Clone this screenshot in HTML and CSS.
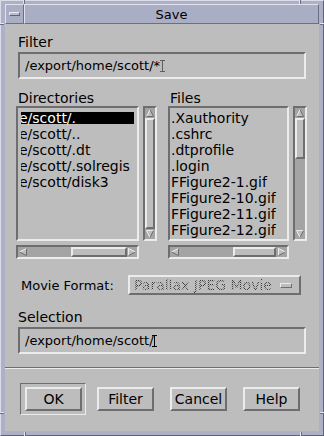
FILE: index.html
```html
<!DOCTYPE html>
<html lang="en">
<head>
    <meta charset="UTF-8">
    <title>Save</title>
    <link rel="stylesheet" href="styles.css">
</head>
<body>
    <div class="window">
        <span class="notch notch-top-l"></span>
        <span class="notch notch-top-r"></span>
        <span class="notch notch-bot-l"></span>
        <span class="notch notch-bot-r"></span>
        <span class="notch-h notch-left-t"></span>
        <span class="notch-h notch-left-b"></span>
        <span class="notch-h notch-right-t"></span>
        <span class="notch-h notch-right-b"></span>

        <div class="titlebar">
            <div class="menu-btn"><span class="menu-bar"></span></div>
            <div class="title">Save</div>
        </div>

        <div class="dialog">
            <div class="label label-first">Filter</div>
            <div class="field">/export/home/scott/*<span class="caret dim"></span></div>

            <div class="lists">
                <div class="pane pane-dirs">
                    <div class="label">Directories</div>
                    <div class="list-row">
                        <div class="list list-dirs">
                            <div class="item selected">e/scott/.</div>
                            <div class="item">e/scott/..</div>
                            <div class="item">e/scott/.dt</div>
                            <div class="item">e/scott/.solregis</div>
                            <div class="item">e/scott/disk3</div>
                        </div>
                        <div class="vscroll">
                            <svg class="arrow" width="10" height="10"><polygon points="5,1 9,9 1,9" fill="#bdbdbd"/><path d="M1.5 9 L5 1.5" stroke="#ececec" fill="none"/><path d="M5 1.5 L8.5 8.5 L1.5 8.5" stroke="#6e6e6e" fill="none"/></svg>
                            <div class="track"><div class="slider" style="height:111px"></div></div>
                            <svg class="arrow" width="10" height="10"><polygon points="1,1 9,1 5,9" fill="#bdbdbd"/><path d="M5 8.5 L1.5 1.5 L8.5 1.5" stroke="#ececec" fill="none"/><path d="M8.5 1.5 L5 8.5" stroke="#6e6e6e" fill="none"/></svg>
                        </div>
                    </div>
                    <div class="hscroll">
                        <svg class="arrow" width="10" height="10"><polygon points="1,5 9,1 9,9" fill="#bdbdbd"/><path d="M1.5 5 L8.5 1.5" stroke="#ececec" fill="none"/><path d="M8.5 1.5 L8.5 8.5 L1.5 5" stroke="#6e6e6e" fill="none"/></svg>
                        <div class="htrack"><div class="hslider" style="margin-left:43px;width:56px"></div></div>
                        <svg class="arrow" width="10" height="10"><polygon points="1,1 9,5 1,9" fill="#bdbdbd"/><path d="M1.5 8.5 L1.5 1.5 L8.5 5" stroke="#ececec" fill="none"/><path d="M8.5 5 L1.5 8.5" stroke="#6e6e6e" fill="none"/></svg>
                    </div>
                </div>

                <div class="pane pane-files">
                    <div class="label">Files</div>
                    <div class="list-row">
                        <div class="list list-files">
                            <div class="item">.Xauthority</div>
                            <div class="item">.cshrc</div>
                            <div class="item">.dtprofile</div>
                            <div class="item">.login</div>
                            <div class="item">FFigure2-1.gif</div>
                            <div class="item">FFigure2-10.gif</div>
                            <div class="item">FFigure2-11.gif</div>
                            <div class="item">FFigure2-12.gif</div>
                        </div>
                        <div class="vscroll">
                            <svg class="arrow" width="10" height="10"><polygon points="5,1 9,9 1,9" fill="#bdbdbd"/><path d="M1.5 9 L5 1.5" stroke="#ececec" fill="none"/><path d="M5 1.5 L8.5 8.5 L1.5 8.5" stroke="#6e6e6e" fill="none"/></svg>
                            <div class="track"><div class="slider" style="height:41px"></div></div>
                            <svg class="arrow" width="10" height="10"><polygon points="1,1 9,1 5,9" fill="#bdbdbd"/><path d="M5 8.5 L1.5 1.5 L8.5 1.5" stroke="#ececec" fill="none"/><path d="M8.5 1.5 L5 8.5" stroke="#6e6e6e" fill="none"/></svg>
                        </div>
                    </div>
                    <div class="hscroll">
                        <svg class="arrow" width="10" height="10"><polygon points="1,5 9,1 9,9" fill="#bdbdbd"/><path d="M1.5 5 L8.5 1.5" stroke="#ececec" fill="none"/><path d="M8.5 1.5 L8.5 8.5 L1.5 5" stroke="#6e6e6e" fill="none"/></svg>
                        <div class="htrack"><div class="hslider" style="margin-left:53px;width:43px"></div></div>
                        <svg class="arrow" width="10" height="10"><polygon points="1,1 9,5 1,9" fill="#bdbdbd"/><path d="M1.5 8.5 L1.5 1.5 L8.5 5" stroke="#ececec" fill="none"/><path d="M8.5 5 L1.5 8.5" stroke="#6e6e6e" fill="none"/></svg>
                    </div>
                </div>
            </div>

            <div class="format-row">
                <span class="format-label">Movie Format:</span>
                <div class="option">
                    <span class="option-text">Parallax JPEG Movie</span>
                    <span class="option-mark"></span>
                </div>
            </div>

            <div class="label label-selection">Selection</div>
            <div class="field">/export/home/scott/<span class="caret"></span></div>

            <div class="separator"></div>

            <div class="buttons">
                <div class="default-ring"><button type="button">OK</button></div>
                <button type="button" class="btn-filter">Filter</button>
                <button type="button" class="btn-gap">Cancel</button>
                <button type="button" class="btn-gap">Help</button>
            </div>
        </div>
    </div>
</body>
</html>
```

FILE: styles.css
```css
html, body {
    margin: 0;
    padding: 0;
}
body {
    width: 324px;
    height: 436px;
    overflow: hidden;
    font-family: "DejaVu Sans", sans-serif;
    color: #000;
}
.window {
    position: relative;
    box-sizing: border-box;
    width: 324px;
    height: 436px;
    display: flex;
    flex-direction: column;
    background: #aeb1c6;
    border: 1px solid;
    border-color: #dadcea #5f6378 #5f6378 #dadcea;
    padding: 3px 4px 4px 4px;
}

/* resize handle marks on the frame */
.notch {
    position: absolute;
    width: 1px;
    height: 4px;
    background: #e2e4ee;
    box-shadow: 1px 0 0 #6b6f85;
}
.notch-top-l { left: 22px; top: -1px; }
.notch-top-r { left: 298px; top: -1px; }
.notch-bot-l { left: 23px; bottom: -1px; }
.notch-bot-r { left: 299px; bottom: -1px; }
.notch-h {
    position: absolute;
    width: 4px;
    height: 1px;
    background: #e2e4ee;
    box-shadow: 0 1px 0 #6b6f85;
}
.notch-left-t { left: -1px; top: 22px; }
.notch-left-b { left: -1px; top: 411px; }
.notch-right-t { right: -1px; top: 22px; }
.notch-right-b { right: -1px; top: 411px; }

.titlebar {
    display: flex;
    height: 20px;
    background: #aaaec5;
}
.menu-btn {
    box-sizing: border-box;
    width: 19px;
    display: flex;
    align-items: center;
    justify-content: center;
    border: 1px solid;
    border-color: #e0e2ee #6b6f85 #6b6f85 #e0e2ee;
}
.menu-bar {
    box-sizing: border-box;
    width: 11px;
    height: 4px;
    background: #b8bbcf;
    border: 1px solid;
    border-color: #eceef5 #5f6378 #5f6378 #eceef5;
}
.title {
    flex: 1;
    box-sizing: border-box;
    border: 1px solid;
    border-color: #e0e2ee #6b6f85 #6b6f85 #e0e2ee;
    text-align: center;
    font-size: 13px;
    line-height: 18px;
    padding-top: 1px;
}

.dialog {
    flex: 1;
    box-sizing: border-box;
    display: flex;
    flex-direction: column;
    background: #bdbdbd;
    padding: 0 12px 0 11px;
}
.label {
    font-size: 14px;
    line-height: 15px;
    height: 15px;
    margin-left: 2px;
    white-space: nowrap;
}
.label-first {
    margin-top: 11px;
}
.label-selection {
    margin-top: 15px;
}
.field {
    box-sizing: border-box;
    height: 27px;
    margin: 2px 1px 0 2px;
    padding-left: 5px;
    border: 2px solid;
    border-color: #6e6e6e #ececec #ececec #6e6e6e;
    font-size: 13px;
    line-height: 23px;
    white-space: nowrap;
}
.caret {
    display: inline-block;
    box-sizing: border-box;
    width: 5px;
    height: 12px;
    margin-left: -2px;
    vertical-align: -2px;
    border-top: 1px solid #000;
    border-bottom: 1px solid #000;
    background: linear-gradient(#000, #000) center / 1px 100% no-repeat;
}
.caret.dim {
    opacity: 0.5;
    margin-left: 0;
}

.lists {
    display: flex;
    margin-top: 12px;
}
.pane-dirs {
    width: 141px;
}
.pane-files {
    width: 139px;
    margin-left: 11px;
}
.list-row {
    display: flex;
    height: 135px;
}
.list {
    flex: 1;
    box-sizing: border-box;
    border: 2px solid;
    border-color: #6e6e6e #ececec #ececec #6e6e6e;
    padding-top: 4px;
    overflow: hidden;
}
.item {
    height: 16px;
    line-height: 12px;
    margin: 0 3px;
    font-size: 14px;
    white-space: nowrap;
    overflow: hidden;
}
.list-dirs .item {
    text-indent: -2px;
}
.list-files .item {
    margin-left: 1px;
}
.item.selected {
    background: linear-gradient(#000, #000) 0 0 / 100% 12px no-repeat;
    color: #fff;
}
.vscroll {
    box-sizing: border-box;
    width: 14px;
    margin-left: 4px;
    display: flex;
    flex-direction: column;
    border: 2px solid;
    border-color: #6e6e6e #ececec #ececec #6e6e6e;
    background: #a4a4a4;
}
.arrow {
    display: block;
    flex: none;
}
.track {
    flex: 1;
}
.slider,
.hslider {
    box-sizing: border-box;
    background: #bdbdbd;
    border: 2px solid;
    border-color: #ececec #6e6e6e #6e6e6e #ececec;
}
.hscroll {
    box-sizing: border-box;
    height: 14px;
    margin: 4px 18px 0 0;
    display: flex;
    border: 2px solid;
    border-color: #6e6e6e #ececec #ececec #6e6e6e;
    background: #a4a4a4;
}
.htrack {
    flex: 1;
    display: flex;
}
.hslider {
    height: 10px;
}

.format-row {
    display: flex;
    align-items: center;
    height: 20px;
    margin-top: 16px;
}
.format-label {
    flex: 0 0 107px;
    margin-left: 5px;
    font-size: 13px;
    white-space: nowrap;
}
.option {
    box-sizing: border-box;
    width: 173px;
    height: 20px;
    display: flex;
    align-items: center;
    padding-left: 4px;
    border: 2px solid;
    border-color: #ececec #6e6e6e #6e6e6e #ececec;
}
.option-text {
    font-size: 14px;
    line-height: 16px;
    white-space: nowrap;
    color: transparent;
    background: repeating-conic-gradient(#3a3a3a 0 25%, transparent 0 50%) 0 0 / 2px 2px;
    -webkit-background-clip: text;
    background-clip: text;
}
.option-mark {
    box-sizing: border-box;
    width: 12px;
    height: 5px;
    margin-left: auto;
    margin-right: 7px;
    border: 1px solid;
    border-color: #ececec #6e6e6e #6e6e6e #ececec;
}

.separator {
    margin: 13px -12px 0 -11px;
    border-top: 1px solid #6e6e6e;
    border-bottom: 1px solid #ececec;
}

.buttons {
    display: flex;
    align-items: center;
    margin-top: 14px;
    padding-left: 4px;
}
.default-ring {
    display: flex;
    border: 1px solid;
    border-color: #6e6e6e #ececec #ececec #6e6e6e;
    padding: 3px 3px 3px 4px;
}
button {
    box-sizing: border-box;
    width: 57px;
    height: 24px;
    padding: 0;
    margin: 0;
    background: #bdbdbd;
    border: 2px solid;
    border-color: #ececec #6e6e6e #6e6e6e #ececec;
    font-family: "DejaVu Sans", sans-serif;
    font-size: 14px;
    color: #000;
}
.btn-filter {
    margin-left: 11px;
}
.btn-gap {
    margin-left: 16px;
}
```
